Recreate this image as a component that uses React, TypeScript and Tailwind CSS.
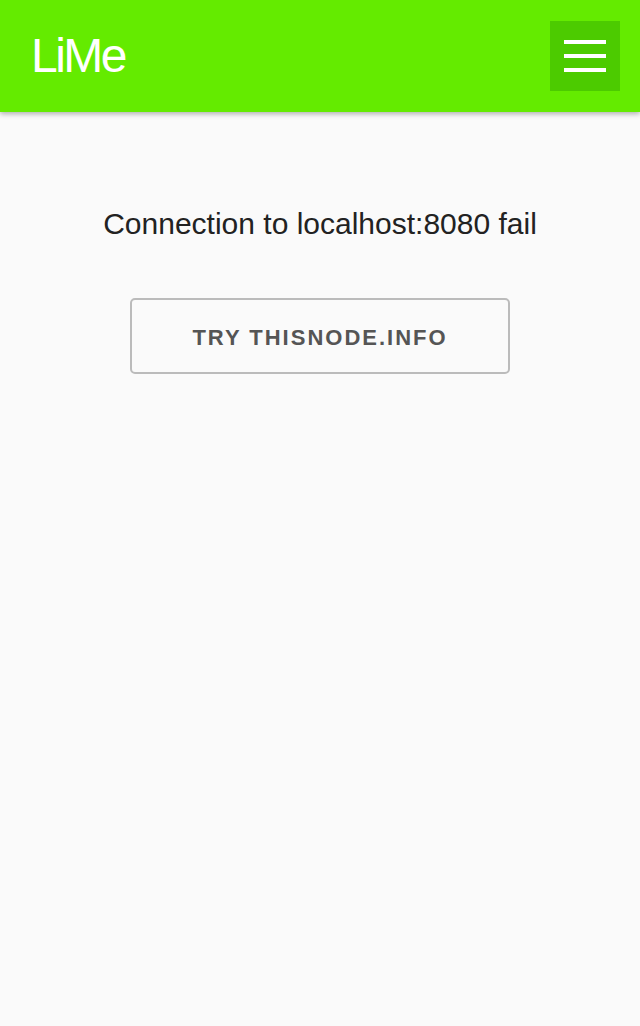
export default function App() {
  return (
    <div className="min-h-[1026px] bg-[#fafafa] font-['Liberation_Sans',Arial,sans-serif]">
      <header className="h-[112px] bg-[#64eb00] flex items-center justify-between pl-[31px] pr-[20px] shadow-[0_2px_5px_rgba(0,0,0,0.3)]">
        <h1 className="text-white text-[48px] leading-none tracking-[-2.5px] font-normal">LiMe</h1>
        <button className="w-[70px] h-[70px] bg-[#4ccb00] flex flex-col items-center justify-center gap-[10px]">
          <span className="block w-[42px] h-[4px] bg-white" />
          <span className="block w-[42px] h-[4px] bg-white" />
          <span className="block w-[42px] h-[4px] bg-white" />
        </button>
      </header>

      <main className="flex flex-col items-center pt-[94px]">
        <p className="text-[30px] text-[#222] leading-[36px]">Connection to localhost:8080 fail</p>
        <button className="mt-[56px] w-[380px] h-[76px] pt-[3px] border-2 border-[#bbb] rounded-[5px] text-[22px] font-bold tracking-[2px] text-[#555]">
          TRY THISNODE.INFO
        </button>
      </main>
    </div>
  )
}
